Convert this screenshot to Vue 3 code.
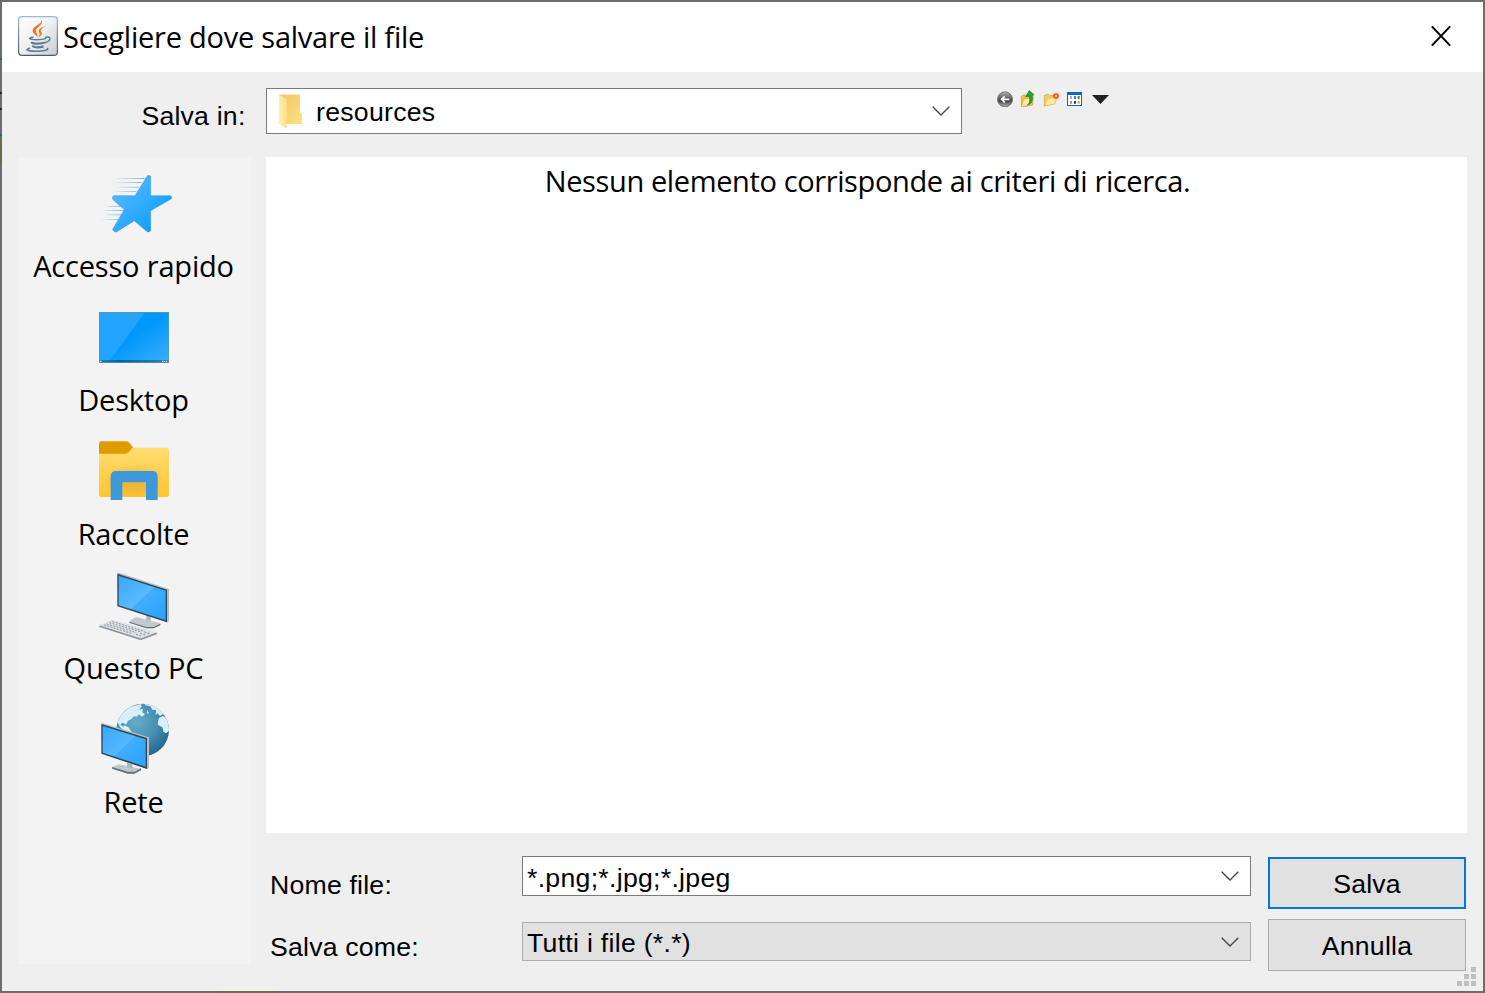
<script setup>
import { ref } from 'vue'

const places = [
  { id: 'quick', label: 'Accesso rapido' },
  { id: 'desktop', label: 'Desktop' },
  { id: 'libraries', label: 'Raccolte' },
  { id: 'pc', label: 'Questo PC' },
  { id: 'network', label: 'Rete' },
]
const fileName = ref('*.png;*.jpg;*.jpeg')
const gripDots = [[14, 0], [7, 7], [14, 7], [0, 14], [7, 14], [14, 14]]
</script>

<template>
  <div class="frame">
    <div class="dialog">
      <header class="titlebar">
        <svg class="java" viewBox="0 0 40 40">
          <defs>
            <linearGradient id="jbg" x1="0" y1="0" x2="1" y2="1">
              <stop offset="0" stop-color="#fff" /><stop offset=".45" stop-color="#f2f2f2" /><stop offset="1" stop-color="#c9cccf" />
            </linearGradient>
            <linearGradient id="jbd" x1="0" y1="0" x2="0" y2="1">
              <stop offset="0" stop-color="#9db8cf" /><stop offset="1" stop-color="#3f5f7c" />
            </linearGradient>
          </defs>
          <rect x=".6" y=".6" width="38.8" height="38.8" rx="3.5" fill="url(#jbg)" stroke="url(#jbd)" stroke-width="1.2" />
          <path d="M23.200 3.500c2.200 4.800-8.700 6.300-8.600 11.200.1 2.900 4 4.200 4.800 6.800.9-2.700-1.400-4.400-1.500-6.700-.1-3.600 9-6.300 5.300-11.300z" fill="#ee7422" />
          <path d="M27.300 10.200c-4.600 1.200-7.600 3.200-6.300 6 .8 1.600 1 3-.8 5.200 4-1.700 4.200-3.900 3-5.700-1.200-2 1-3.800 4.100-5.500z" fill="#ee7422" />
          <g fill="none" stroke="#5b7d9b" stroke-linecap="round">
            <path d="M15 21.200c-5.500.8-4 2.500 3.500 2.500 4.500 0 7.500-.4 9.200-1.300" stroke-width="1.600" />
            <path d="M27.800 21.200c5.500-1.300 5.500 3.700-.3 5.200" stroke-width="1.500" />
            <path d="M13.800 26.600c1.500 1.300 9.500 1.200 12.500.2" stroke-width="2.200" />
            <path d="M15 30.400c2 1.200 7 1.100 9.800.2" stroke-width="2.200" />
            <path d="M11.500 32.300c-7 2.100 2 3.200 9.500 2.900 6-.2 9.500-1.200 8.500-2.700" stroke-width="1.600" />
          </g>
        </svg>
        <h1 class="title">Scegliere dove salvare il file</h1>
        <svg class="close" viewBox="0 0 20 20"><path d="M.8.300 19.200 19.700M19.200.3.800 19.700" stroke="#000" stroke-width="1.900" /></svg>
      </header>

      <div class="lookin">
        <label class="lookin-label">Salva in:</label>
        <div class="combo combo-dir">
          <svg class="folder" viewBox="0 0 26 36">
            <defs>
              <linearGradient id="fb" x1="0" y1="0" x2="1" y2="1"><stop offset="0" stop-color="#edc865" /><stop offset="1" stop-color="#ffe082" /></linearGradient>
              <linearGradient id="ff" x1="0" y1="0" x2="1" y2="0"><stop offset="0" stop-color="#ffefb2" /><stop offset="1" stop-color="#ffe18a" /></linearGradient>
            </defs>
            <path d="M1 1.500h21v17.500l2 2.700V31H1z" fill="url(#fb)" />
            <path d="M.8 1.500 8.700 6.300V35.700L.8 30.500z" fill="url(#ff)" />
          </svg>
          <span class="value">resources</span>
          <svg class="chevron" viewBox="0 0 18 10"><path d="M.7.700 9 9 17.300.7" /></svg>
        </div>
        <nav class="tools">
          <svg width="23" height="17" viewBox="51 30 69 51">
            <defs><linearGradient id="bk" x1="0" y1="0" x2="0" y2="1"><stop offset="0" stop-color="#b4b4b4" /><stop offset=".45" stop-color="#5c5c5c" /><stop offset=".6" stop-color="#444" /><stop offset="1" stop-color="#b0b0b0" /></linearGradient></defs>
            <circle cx="75" cy="58" r="22.500" fill="url(#bk)" stroke="#6a6a6a" stroke-width="2.500" />
            <path d="M88 58H66M74 49l-9 9 9 9" fill="none" stroke="#fff" stroke-width="5" />
          </svg>
          <svg width="23" height="17" viewBox="120 30 69 51">
            <path d="M124 49l9-5 4 3 21 2v26l-33 6z" fill="#ecc145" stroke="#c9982a" stroke-width="2" />
            <path d="M130 58l31-7-6 24-30 5z" fill="#ffeb9c" stroke="#d7aa38" stroke-width="2" />
            <path d="M142 75c8-5 9-15 5-27l-10 2 11-18 14 12-6 3c4 15-1 25-14 28z" fill="#2ca52f" stroke="#13731a" stroke-width="2" />
          </svg>
          <svg width="24" height="17" viewBox="189 30 72 51">
            <path d="M193 78V46l12-3 4 4 15-1v24z" fill="#f3cc60" stroke="#d2a142" stroke-width="2" />
            <path d="M194 78l7-22 30-5-7 21z" fill="#ffe99a" stroke="#dfb34c" stroke-width="2" />
            <path d="M228 38v20M218 48h20M221 41l14 14M235 41l-14 14" stroke="#ff4a1d" stroke-width="4" />
            <circle cx="228" cy="48" r="3.500" fill="#ffd071" />
          </svg>
          <svg width="25" height="17" viewBox="261 30 75 51">
            <rect x="262.500" y="37.500" width="42" height="39" fill="#fff" stroke="#0a68cc" stroke-width="3" />
            <path d="M261 36h45v9h-45z" fill="#0a68cc" />
            <path d="M270 48h6v9h-6z" fill="#b8a9cf" /><path d="M282 48h6v9h-6z" fill="#3f86d6" /><path d="M293 48h6v9h-6z" fill="#249a35" />
            <path d="M270 63h6v8h-6z" fill="#f57950" /><path d="M282 63h6v8h-6z" fill="#173789" /><path d="M293 63h6v8h-6z" fill="#d4a22a" />
          </svg>
          <svg width="20" height="17" viewBox="336 30 60 51"><path d="M336 45h51l-25.500 27z" fill="#222" /></svg>
        </nav>
      </div>

      <div class="body">
        <aside class="places">
          <div v-for="p in places" :key="p.id" class="place">
            <svg v-if="p.id === 'quick'" class="place-icon" viewBox="24 9 216 216">
              <defs>
                <linearGradient id="st" x1="0" y1="0" x2="1" y2="1"><stop offset="0" stop-color="#62c0ff" /><stop offset="1" stop-color="#0098ff" /></linearGradient>
                <linearGradient id="la" gradientUnits="userSpaceOnUse" x1="66" y1="0" x2="165" y2="0"><stop offset="0" stop-color="#7bb8dc" stop-opacity="0" /><stop offset="1" stop-color="#6fb2da" /></linearGradient>
                <linearGradient id="lb" gradientUnits="userSpaceOnUse" x1="28" y1="0" x2="110" y2="0"><stop offset="0" stop-color="#7bb8dc" stop-opacity="0" /><stop offset="1" stop-color="#6fb2da" /></linearGradient>
              </defs>
              <path d="M81 39h83v3H81zM69 51h86v3H69zM80 65h66v3H80zM68 78h71v3H68z" fill="url(#la)" />
              <path d="M55 123h35v3H55zM42 135h60v3H42zM50 148h46v3H50zM30 162h58v3H30z" fill="url(#lb)" />
              <path d="M171 34q5-6 11 0V92h59q8 4 2 10l-61 35v60q-5 7-12 2l-37-32-54 34q-10-1-11-8l35-59-35-31q-3-9 4-11h63z" fill="url(#st)" stroke="#2596e5" stroke-width="1.500" />
            </svg>
            <svg v-else-if="p.id === 'desktop'" class="place-icon" viewBox="24 6 216 216">
              <defs>
                <linearGradient id="dk" x1="0" y1="0" x2="1" y2="1"><stop offset=".5" stop-color="#0098fb" /><stop offset="1" stop-color="#3cadfc" /></linearGradient>
                <linearGradient id="tb" x1="0" y1="0" x2="1" y2="0"><stop offset="0" stop-color="#1682c4" /><stop offset=".3" stop-color="#00639f" /><stop offset="1" stop-color="#2c81b6" /></linearGradient>
              </defs>
              <path d="M27 36h210v153H27z" fill="#5796b9" />
              <path d="M29 39h206v141H29z" fill="url(#dk)" />
              <path d="M29 39h135L60 180H29z" fill="#22a5ff" />
              <path d="M29 180h206v7H29z" fill="url(#tb)" />
              <path d="M30 182h4v4h-4zM216 182h4v4h-4zM222 182h3v4h-3zM228 182h3v4h-3z" fill="#c5e4f5" />
            </svg>
            <svg v-else-if="p.id === 'libraries'" class="place-icon" viewBox="24 12 216 216">
              <defs>
                <linearGradient id="lf" x1="0" y1="0" x2="0" y2="1"><stop offset="0" stop-color="#ffdc72" /><stop offset="1" stop-color="#ffc62f" /></linearGradient>
                <radialGradient id="lsh" cx=".5" cy=".55" r=".5"><stop offset=".4" stop-color="#c08a20" stop-opacity=".28" /><stop offset="1" stop-color="#c08a20" stop-opacity="0" /></radialGradient>
              </defs>
              <path d="M27 60h82l18-13h102q8 0 8 8v132q0 8-8 8H35q-8 0-8-8z" fill="url(#lf)" />
              <rect x="42" y="92" width="182" height="103" fill="url(#lsh)" />
              <path d="M27 65V36q0-8 8-8h74q5 0 9 4l11 14-15 16q-3 3-8 3z" fill="#df9c00" />
              <path d="M62 204v-70q0-17 17-17h108q16 0 16 17v70h-35v-53H97v53z" fill="#3d98dc" />
            </svg>
            <svg v-else-if="p.id === 'pc'" class="place-icon" viewBox="24 15 216 216">
              <defs><linearGradient id="ps" x1="0" y1="0" x2="1" y2="1"><stop offset="0" stop-color="#35a8ff" /><stop offset=".5" stop-color="#5cbbff" /><stop offset=".51" stop-color="#40adff" /><stop offset="1" stop-color="#2aa3ff" /></linearGradient></defs>
              <path d="M118 168l20-12 73 19v5l-20 10h-22l-51-17z" fill="#c0c9cd" />
              <path d="M118 170l51 16h22l20-10v5l-20 9h-22l-51-17z" fill="#64737a" />
              <path d="M169 150l13 4v14l-13-3z" fill="#aab5ba" />
              <path d="M81 25l5-2 151 49v97l-6 4z" fill="#b3bbbe" />
              <path d="M82 26l149 48v98L82 124z" fill="#2e4657" />
              <path d="M86 32l141 45v89L86 121z" fill="url(#ps)" />
              <path d="M28 182l39-16 134 37v5l-45 16h-8L28 186z" fill="#8b979d" />
              <path d="M28 181l39-16 134 37-45 17h-8z" fill="#dce2e5" />
              <g stroke="#8c979c" stroke-width="3" stroke-dasharray="6 4" fill="none">
                <path d="M42 180l83 25M50 177l89 26M58 173l92 27M67 170l97 29" />
                <path d="M138 208l15 5M150 205l16 4M163 201l18 5" />
              </g>
            </svg>
            <svg v-else class="place-icon" viewBox="24 21 216 216">
              <defs>
                <radialGradient id="gl" cx=".38" cy=".35" r=".7"><stop offset="0" stop-color="#68abc6" /><stop offset=".55" stop-color="#4690b1" /><stop offset="1" stop-color="#21678c" /></radialGradient>
                <linearGradient id="ns" x1="0" y1="0" x2="1" y2="1"><stop offset="0" stop-color="#35a8ff" /><stop offset=".5" stop-color="#55b8ff" /><stop offset=".51" stop-color="#40adff" /><stop offset="1" stop-color="#2aa3ff" /></linearGradient>
                <clipPath id="gc"><circle cx="158" cy="99" r="79" /></clipPath>
              </defs>
              <circle cx="158" cy="99" r="79" fill="url(#gl)" />
              <g clip-path="url(#gc)" fill="#d9eff7">
                <path d="M83 75l12-25 25-20 33-9 2 8-8 9 12-2-2 10 8 6-9 7-9-7-6 7-9-1-9 9-9 4-6 12-9-6-8 5 6 6 9 3 4 12-8-3-12-10z" />
                <path d="M100 85l15 5 10 15-8 5-10-6z" />
                <path d="M165 20l25 3 22 15 14 20-8-6-8 5-8-8-6 6 3-15-12-2-6-10-15-3z" />
                <path d="M206 64l12-7 14 5 8 37-12 10-7-4-4-14-14-8z" />
                <path d="M171 40l6 8-5 3z" />
              </g>
              <path d="M66 210l20-8 67 13v5l-20 10h-20l-46-15z" fill="#c0c9cd" />
              <path d="M66 210l48 14h20l19-10v6l-20 10h-20l-46-15z" fill="#64737a" />
              <path d="M111 197l16 5v12l-16-3z" fill="#aab5ba" />
              <path d="M33 80l5-2 139 43v92l-6 4z" fill="#b9c0c3" />
              <path d="M34 81l137 42v93L34 170z" fill="#2e4657" />
              <path d="M38 87l129 40v82L38 167z" fill="url(#ns)" />
            </svg>
            <span class="place-label">{{ p.label }}</span>
          </div>
        </aside>

        <main class="content">
          <section class="filelist"><span class="empty">Nessun elemento corrisponde ai criteri di ricerca.</span></section>
          <div class="form">
            <div class="labels">
              <label>Nome file:</label>
              <label>Salva come:</label>
            </div>
            <div class="fields">
              <div class="combo combo-name">
                <span class="value">{{ fileName }}</span>
                <svg class="chevron" viewBox="0 0 18 10"><path d="M.7.700 9 9 17.300.7" /></svg>
              </div>
              <div class="combo combo-type">
                <span class="value">Tutti i file (*.*)</span>
                <svg class="chevron" viewBox="0 0 18 10"><path d="M.7.700 9 9 17.300.7" /></svg>
              </div>
            </div>
            <div class="actions">
              <button class="btn primary" type="button">Salva</button>
              <button class="btn" type="button">Annulla</button>
            </div>
          </div>
        </main>
      </div>
      <svg class="grip" viewBox="0 0 19 19">
        <rect v-for="(d, i) in gripDots" :key="i" :x="d[0]" :y="d[1]" width="5" height="5" fill="#bfbfbf" />
      </svg>
    </div>
  </div>
</template>

<style>
body { margin: 0; overflow: hidden; }
</style>

<style scoped>
.frame {
  box-sizing: border-box;
  width: 1485px;
  height: 993px;
  padding: 2px;
  background:
    linear-gradient(#6f6d52, #6f6d52) 218px 991px / 58px 2px no-repeat,
    linear-gradient(#6b6b54, #6b6b54) 0 137px / 2px 26px no-repeat,
    linear-gradient(#176a86, #176a86) 0 58px / 2px 2px no-repeat,
    linear-gradient(#176a86, #176a86) 0 134px / 2px 2px no-repeat,
    linear-gradient(#2b2b2b, #2b2b2b) 0 92px / 2px 2px no-repeat,
    linear-gradient(#2b2b2b, #2b2b2b) 0 108px / 2px 2px no-repeat,
    #6c6c6c;
  color: #000;
  font-family: "Liberation Sans", Arial, sans-serif;
  font-size: 26.67px;
  letter-spacing: 0.2px;
}
.dialog { position: relative; height: 989px; background: #efefef; }
.titlebar { display: flex; height: 70px; background: #fff; }
.java { flex: none; width: 40px; height: 40px; margin: 14px 0 0 16px; }
.title {
  margin: 14px 0 0 5px;
  font: 400 29px/42px "Open Sans", "Noto Sans", sans-serif;
  letter-spacing: -0.24px;
  white-space: nowrap;
}
.close { width: 20px; height: 20px; margin: 24px 32px 0 auto; }
.lookin { display: flex; height: 85px; }
.lookin-label { width: 243.5px; padding-top: 28px; line-height: 32px; text-align: right; }
.combo {
  box-sizing: border-box;
  display: flex;
  align-items: center;
  border: 1px solid #7a7a7a;
  background: #fff;
  white-space: pre;
}
.chevron { width: 18px; height: 10px; margin-left: auto; }
.chevron path { fill: none; stroke: #444; stroke-width: 1.3; }
.combo-dir { width: 696px; height: 46px; margin: 16px 0 0 20.5px; padding: 0 11.5px 0 11px; }
.folder { width: 26px; height: 36px; margin-right: 12px; }
.combo-dir .value { padding-top: 2px; letter-spacing: 0.27px; }
.tools { display: flex; margin: 18px 0 0 35px; }
.body { display: flex; gap: 15px; padding: 0 16px; }
.places { width: 233px; height: 807px; background: #f3f3f3; }
.place { display: flex; flex-direction: column; align-items: center; height: 123px; padding-top: 11px; }
.place-icon { width: 72px; height: 72px; margin-left: -1px; overflow: visible; }
.place-label {
  margin: 6px 2px 0 0;
  font: 400 29px/40px "Open Sans", "Noto Sans", sans-serif;
  letter-spacing: -0.18px;
  white-space: nowrap;
}
.filelist { width: 1201px; height: 676px; background: #fff; text-align: center; }
.empty {
  display: block;
  padding: 4px 0 0 2px;
  font: 400 29px/40px "Open Sans", "Noto Sans", sans-serif;
  letter-spacing: -0.38px;
  white-space: nowrap;
}
.form { display: flex; }
.labels { display: flex; flex-direction: column; gap: 30px; width: 252px; padding: 36px 0 0 4px; line-height: 32px; }
.fields { display: flex; flex-direction: column; gap: 26px; padding-top: 23px; }
.combo-name, .combo-type { width: 729px; height: 40px; padding: 0 11.5px 0 4px; letter-spacing: 0.28px; }
.combo-name .value { padding-top: 4px; }
.combo-type { height: 39px; border-color: #adadad; background: #e1e1e1; }
.combo-type .value { padding-top: 3px; }
.actions { display: flex; flex-direction: column; gap: 10px; padding: 24px 0 0 17px; }
.btn {
  box-sizing: border-box;
  width: 198px;
  height: 52px;
  padding: 2px 0 0;
  border: 1px solid #adadad;
  border-radius: 0;
  background: #e1e1e1;
  color: #000;
  font: inherit;
  letter-spacing: 0.2px;
}
.btn.primary { border: 2px solid #0078d7; }
.grip { position: absolute; right: 7px; bottom: 5px; width: 19px; height: 19px; }
</style>
